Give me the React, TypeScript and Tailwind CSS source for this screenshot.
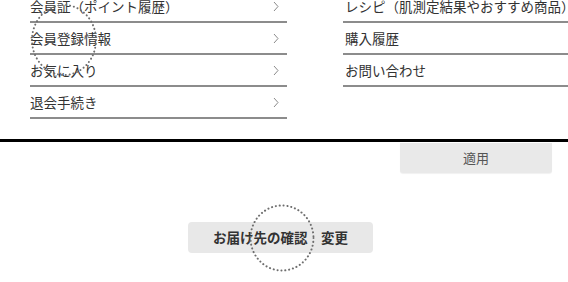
import React from 'react';

const leftItems = ['会員証（ポイント履歴）', '会員登録情報', 'お気に入り', '退会手続き'];
const rightItems = ['レシピ（肌測定結果やおすすめ商品）', '購入履歴', 'お問い合わせ'];

function Chevron() {
  return (
    <svg width="6" height="11" viewBox="0 0 6 11" className="shrink-0">
      <polyline points="1,1 5,5.5 1,10" fill="none" stroke="#8a8a8a" strokeWidth="1" />
    </svg>
  );
}

function DottedRing({ cx, cy, rx, ry }: { cx: number; cy: number; rx: number; ry: number }) {
  return (
    <ellipse
      cx={cx}
      cy={cy}
      rx={rx}
      ry={ry}
      fill="none"
      stroke="#6e6e6e"
      strokeWidth="2"
      strokeLinecap="round"
      strokeDasharray="0.1 3.8"
    />
  );
}

export default function App() {
  return (
    <div
      className="relative w-[568px] h-[282px] overflow-hidden bg-white text-[#333]"
      style={{ fontFamily: '"Noto Sans CJK JP", "Noto Sans", sans-serif' }}
    >
      {/* メニュー */}
      <div className="flex h-[139px]">
        <ul className="ml-[30px] w-[257px] shrink-0 -mt-[9px]">
          {leftItems.map((item) => (
            <li
              key={item}
              className="flex h-8 items-center justify-between border-b-2 border-[#8c8c8c] pr-[8px] text-[13.5px]"
            >
              <span>{item}</span>
              <Chevron />
            </li>
          ))}
        </ul>
        <ul className="ml-[56px] w-[240px] shrink-0 -mt-[9px]">
          {rightItems.map((item) => (
            <li
              key={item}
              className="flex h-8 items-center whitespace-nowrap border-b-2 border-[#8c8c8c] pl-[2px] text-[13.5px]"
            >
              {item}
            </li>
          ))}
        </ul>
      </div>
      <div className="h-[3px] bg-black" />

      {/* 適用 */}
      <div className="mt-[1px] ml-[400px] flex h-[30px] w-[152px] items-center justify-center rounded-b-[3px] bg-[#e9e9e9] text-[13px] text-[#555] shadow-[0_1px_1px_rgba(0,0,0,0.06)]">
        適用
      </div>

      {/* お届け先 */}
      <div className="mt-[49px] flex justify-start">
        <button
          type="button"
          className="ml-[188px] flex h-[31px] w-[185px] items-center justify-center rounded-[4px] bg-[#e8e8e8] text-[13.5px] font-semibold text-[#333]"
        >
          お届け先の確認　変更
        </button>
      </div>

      {/* 手書きの丸 */}
      <svg className="pointer-events-none absolute inset-0" width="568" height="282">
        <DottedRing cx={64} cy={40} rx={32} ry={35} />
        <DottedRing cx={282} cy={238} rx={31.5} ry={32.5} />
      </svg>
    </div>
  );
}
